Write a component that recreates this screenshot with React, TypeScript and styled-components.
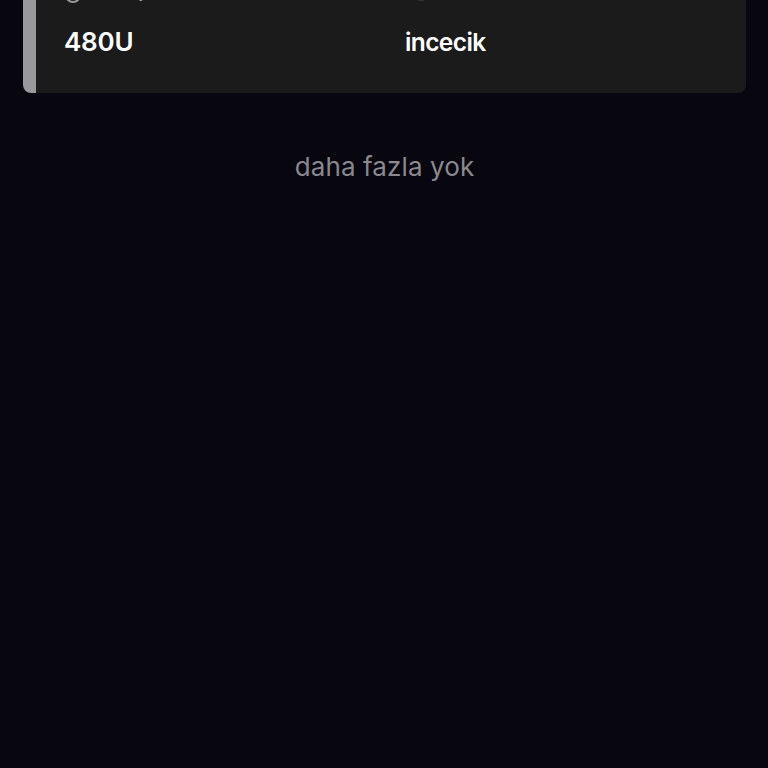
import React from 'react';
import styled, { createGlobalStyle } from 'styled-components';

const GlobalStyle = createGlobalStyle`
  html, body {
    margin: 0;
    padding: 0;
    background: #08060f;
    height: 768px;
    overflow: hidden;
    font-family: Inter, "Noto Sans", sans-serif;
  }
`;

const Page = styled.div`
  height: 768px;
  padding: 0 22px 0 23px;
  overflow: hidden;
`;

const Card = styled.div`
  display: flex;
  height: 93px;
  background: #1b1b1b;
  border-left: 13px solid #99989b;
  border-radius: 0 0 8px 8px;
  box-sizing: border-box;
  overflow: hidden;
`;

const Column = styled.div`
  flex: 0 0 340px;
  padding-left: 29px;
  box-sizing: border-box;
`;

const LabelRow = styled.div<{ $peek: number; $indent?: number }>`
  display: flex;
  height: 20px;
  align-items: flex-end;
  margin-top: ${(p) => p.$peek - 20}px;
  padding-left: ${(p) => p.$indent ?? 0}px;
  color: #99989b;
`;

const LabelTail = styled.span`
  margin-left: 57px;
  font-size: 18px;
  line-height: 20px;
  transform: translateY(-2px);
`;

const Value = styled.div<{ $tight?: boolean }>`
  margin-top: ${(p) => (p.$tight ? 27 : 25)}px;
  margin-left: ${(p) => (p.$tight ? 0 : -1)}px;
  color: #ffffff;
  font-size: ${(p) => (p.$tight ? 24.5 : 26)}px;
  letter-spacing: ${(p) => (p.$tight ? -0.6 : -0.2)}px;
  line-height: 28px;
  font-weight: 600;
`;

const EndNote = styled.div`
  margin-top: 58px;
  text-align: center;
  color: #8a898e;
  font-size: 26px;
  letter-spacing: 0.1px;
  line-height: 32px;
`;

const SpecIcon = ({ faint }: { faint?: boolean }) => (
  <svg width="16" height="16" viewBox="0 0 16 16" fill="none">
    <circle cx="8" cy="8" r="7" stroke={faint ? '#3a3a3b' : '#99989b'} strokeWidth="2" />
  </svg>
);

export default function App() {
  return (
    <>
      <GlobalStyle />
      <Page>
        <Card>
          <Column>
            <LabelRow $peek={3}>
              <SpecIcon />
              <LabelTail>y</LabelTail>
            </LabelRow>
            <Value>480U</Value>
          </Column>
          <Column>
            <LabelRow $peek={1} $indent={8}>
              <SpecIcon faint />
            </LabelRow>
            <Value $tight>incecik</Value>
          </Column>
        </Card>
        <EndNote>daha fazla yok</EndNote>
      </Page>
    </>
  );
}
